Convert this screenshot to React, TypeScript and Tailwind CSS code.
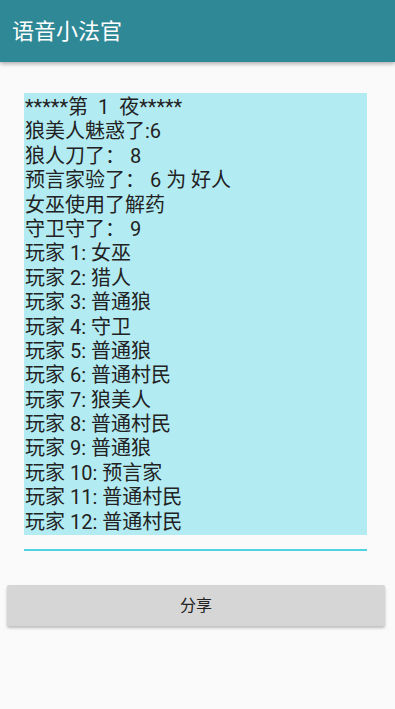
export default function App() {
  const lines = [
    "*****第  1  夜*****",
    "狼美人魅惑了:6",
    "狼人刀了： 8",
    "预言家验了： 6 为 好人",
    "女巫使用了解药",
    "守卫守了： 9",
    "玩家 1: 女巫",
    "玩家 2: 猎人",
    "玩家 3: 普通狼",
    "玩家 4: 守卫",
    "玩家 5: 普通狼",
    "玩家 6: 普通村民",
    "玩家 7: 狼美人",
    "玩家 8: 普通村民",
    "玩家 9: 普通狼",
    "玩家 10: 预言家",
    "玩家 11: 普通村民",
    "玩家 12: 普通村民",
  ];

  return (
    <div
      className="flex h-[709px] w-[395px] flex-col bg-[#fafafa]"
      style={{ fontFamily: 'Roboto, "Noto Sans CJK SC", sans-serif' }}
    >
      <div className="flex h-[62px] items-center bg-[#2e8896] px-3 shadow-[0_2px_4px_rgba(0,0,0,0.3)]">
        <span className="text-[22px] text-white">语音小法官</span>
      </div>

      <div className="flex flex-col pl-6 pr-[28px] pt-[31px]">
        <div className="bg-[#b3ebf2] pb-[1px] pl-[1px] pt-[2px]">
          {lines.map((t) => (
            <div key={t} className="h-[24.4px] whitespace-pre text-[20px] leading-[24.4px] text-[#222]">
              {t}
            </div>
          ))}
        </div>
        <div className="mt-[14px] h-[2px] bg-[#4fd2e2]" />
      </div>

      <div className="px-[7px] pt-[34px]">
        <button
          type="button"
          className="flex h-[41px] w-[378px] items-center justify-center rounded-[2px] bg-[#d6d6d6] text-[16px] text-[#222] shadow-[0_2px_3px_rgba(0,0,0,0.25)]"
        >
          分享
        </button>
      </div>
    </div>
  );
}
